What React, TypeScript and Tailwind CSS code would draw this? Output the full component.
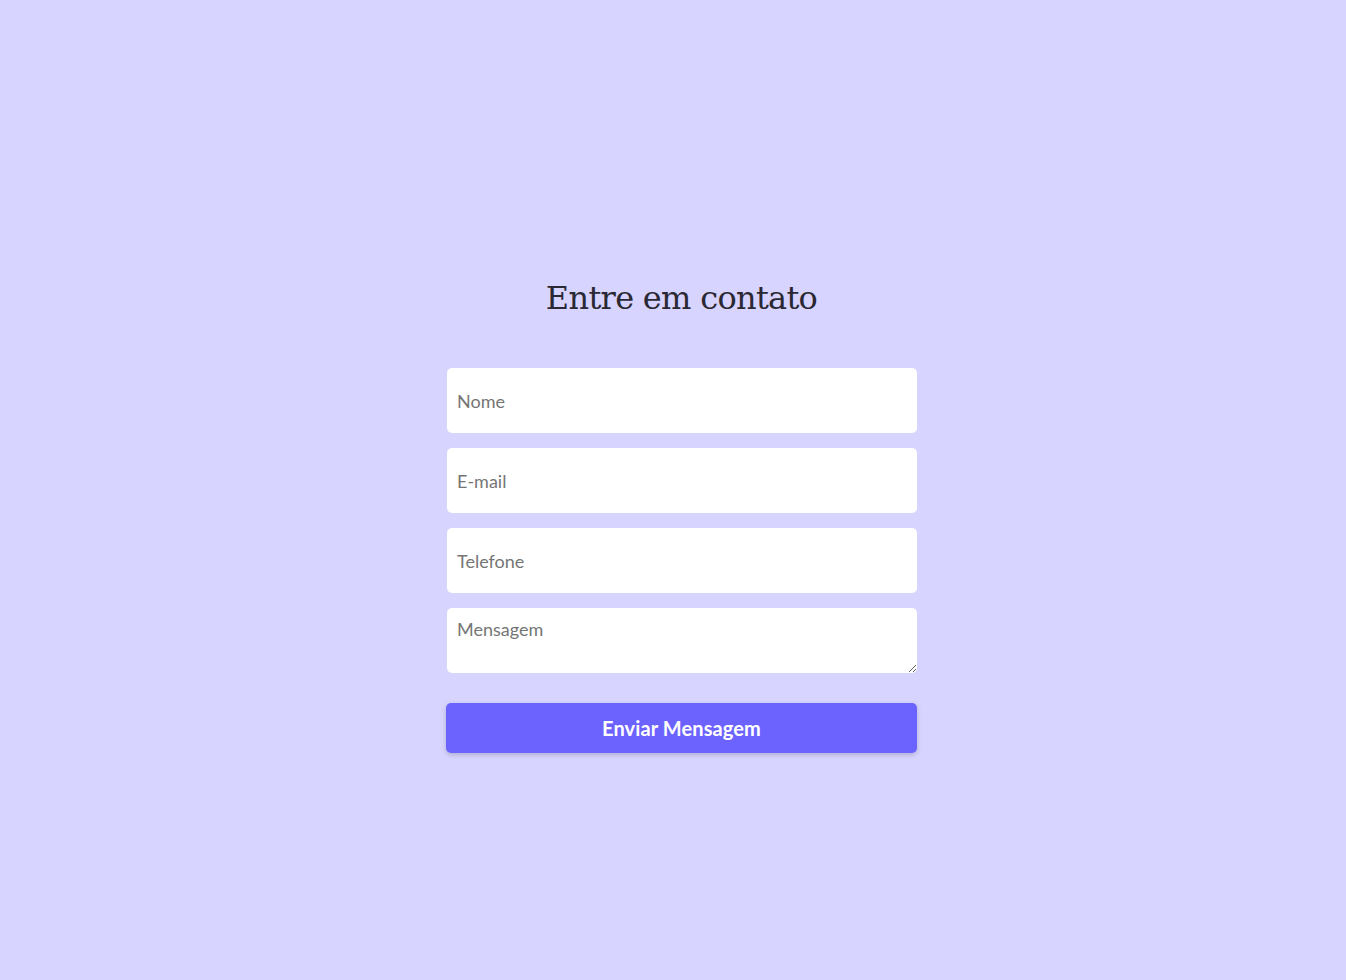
const fields = ["Nome", "E-mail", "Telefone"]

const App = () => {
    return (
        <main className="min-h-screen w-full bg-[#d7d4ff] flex flex-col items-center pt-[276px] pl-[17px] font-['Lato',sans-serif]">
            <h1 className="text-[32px] leading-[44px] text-[#2a2833] font-['DejaVu_Serif','Liberation_Serif',serif] font-normal tracking-[-0.7px]">
                Entre em contato
            </h1>
            <form className="mt-[48px] w-[471px] flex flex-col" onSubmit={(e) => e.preventDefault()}>
                {fields.map((f) => (
                    <input
                        key={f}
                        type="text"
                        placeholder={f}
                        className="ml-[1px] mb-[15px] h-[65px] rounded-[5px] bg-white px-[10px] text-[18px] text-[#333] placeholder:text-[#757575] outline-none"
                    />
                ))}
                <textarea
                    placeholder="Mensagem"
                    className="ml-[1px] h-[65px] rounded-[5px] bg-white px-[10px] pt-[9px] text-[18px] leading-[24px] text-[#333] placeholder:text-[#757575] outline-none"
                />
                <button
                    type="submit"
                    className="mt-[30px] h-[50px] rounded-[5px] bg-[#6c63ff] text-white text-[20px] font-bold tracking-[0.1px] shadow-[0_2px_5px_rgba(0,0,0,0.18)]"
                >
                    Enviar Mensagem
                </button>
            </form>
        </main>
    )
}

export default App
